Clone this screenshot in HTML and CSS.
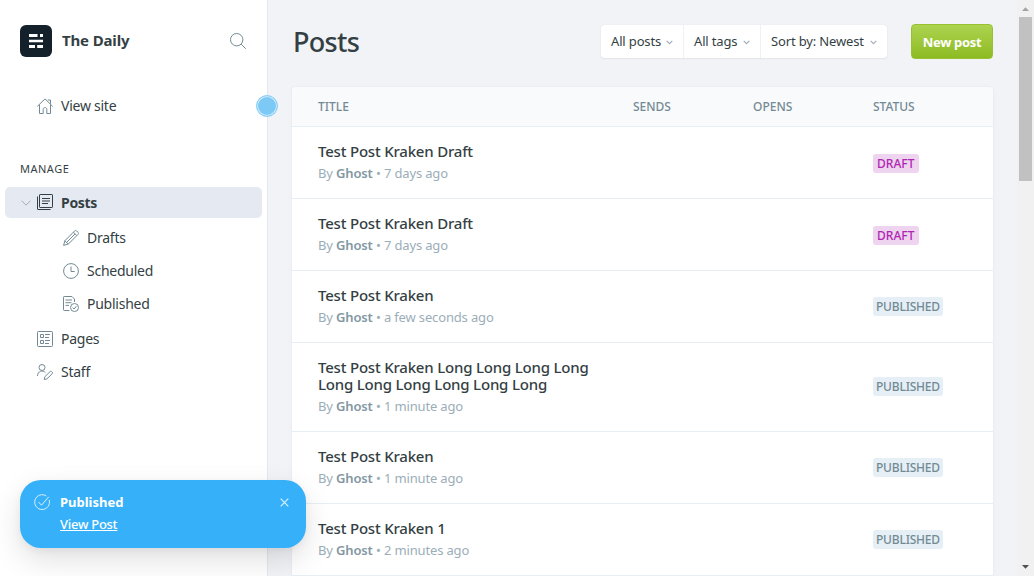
FILE: index.html
```html
<!DOCTYPE html>
<html lang="en">
<head>
<meta charset="utf-8">
<title>Posts - The Daily</title>
<link rel="stylesheet" href="styles.css">
</head>
<body>
<div class="app">
  <nav class="sidebar">
    <header class="brand">
      <svg class="brand-logo" viewBox="0 0 32 32"><rect width="32" height="32" rx="6" fill="#15212a"/><path fill="#fff" d="M9 9h8.500v3H9zM20 9h3v3h-3zM9 14.700h14v2.600H9zM9 20h6v3H9zM17.200 20H23v3h-5.800z"/></svg>
      <span class="brand-name">The Daily</span>
      <svg class="icon search" viewBox="0 0 16 16"><circle cx="6.700" cy="6.700" r="6.200"/><path d="M11.200 11.200l4.600 4.600"/></svg>
    </header>
    <a class="nav-item view-site">
      <svg class="icon" viewBox="0 0 16 16"><path d="M.3 8.400L8 .9l7.700 7.500M2.500 6.700v8.800h3.700v-4.200c0-2.300 3.600-2.300 3.600 0v4.200h3.700V6.700M10.800 2h2.700v3.800"/></svg>
      <span>View site</span>
    </a>
    <h2 class="section-title">MANAGE</h2>
    <ul class="nav-list">
      <li class="nav-item active">
        <svg class="icon chevron" viewBox="0 0 10 6"><path d="M.5.7L5 5.200 9.500.7"/></svg>
        <svg class="icon" viewBox="0 0 16 16"><rect x="2.500" y=".5" width="13" height="13" rx=".6"/><path d="M.5 2.500V15c0 .3.2.5.500.5h12.500M5 4.500h8M5 7h8M5 9.500h6"/></svg>
        <span>Posts</span>
      </li>
      <li class="nav-item sub">
        <svg class="icon" viewBox="0 0 16 16"><path d="M.6 15.400l1.300-4.700L11.700.9c.5-.5 1.300-.5 1.800 0l1.600 1.600c.5.500.5 1.300 0 1.800L5.300 14.100zM1.900 10.700l3.400 3.400M10.400 2.200l3.400 3.400M3.600 12.400l8.500-8.500"/></svg>
        <span>Drafts</span>
      </li>
      <li class="nav-item sub">
        <svg class="icon" viewBox="0 0 16 16"><circle cx="8" cy="8" r="7.400"/><path d="M8 3.500V8.500h3.700"/></svg>
        <span>Scheduled</span>
      </li>
      <li class="nav-item sub">
        <svg class="icon" viewBox="0 0 16 16"><path d="M6.500 14.500H1.200c-.4 0-.7-.3-.7-.7V1.200c0-.4.3-.7.7-.7H9l2.500 2.500v3M2.500 4h6.500M2.500 6.700h6M2.500 9.400h3.500"/><circle cx="11.500" cy="11.500" r="4"/><path d="M9.700 11.600l1.400 1.400 2.400-2.900"/></svg>
        <span>Published</span>
      </li>
      <li class="nav-item page">
        <svg class="icon" viewBox="0 0 16 16"><rect x=".5" y=".5" width="15" height="15" rx=".8"/><path d="M3.500 3.500h3v3h-3zM3.500 9.500h3v3h-3zM8 3.500h5M8 6.500h4M8 9.500h5M8 12.500h4"/></svg>
        <span>Pages</span>
      </li>
      <li class="nav-item page">
        <svg class="icon" viewBox="0 0 16 16"><circle cx="5" cy="3.500" r="3"/><path d="M.5 12c0-5 5.500-6.500 8-3.300M7.200 15.500l.6-2.700 5.300-5.200c.5-.5 1.100-.5 1.600 0l.5.5c.5.5.5 1.100 0 1.600l-5.300 5.200z"/></svg>
        <span>Staff</span>
      </li>
    </ul>
    <span class="marker"></span>
  </nav>

  <main class="content">
    <header class="page-header">
      <h1>Posts</h1>
      <div class="filters">
        <button class="filter f-posts"><span>All posts</span><svg viewBox="0 0 7 5"><path d="M.7.8l2.800 2.900L6.300.8"/></svg></button>
        <button class="filter f-tags"><span>All tags</span><svg viewBox="0 0 7 5"><path d="M.7.8l2.800 2.900L6.300.8"/></svg></button>
        <button class="filter f-sort"><span>Sort by: Newest</span><svg viewBox="0 0 7 5"><path d="M.7.8l2.800 2.900L6.300.8"/></svg></button>
      </div>
      <button class="new-post">New post</button>
    </header>
    <section class="posts">
      <div class="row head"><span>TITLE</span><span>SENDS</span><span>OPENS</span><span>STATUS</span></div>
      <div class="row"><div><h3>Test Post Kraken Draft</h3><p>By <b>Ghost</b> • 7 days ago</p></div><span class="tag draft">DRAFT</span></div>
      <div class="row"><div><h3>Test Post Kraken Draft</h3><p>By <b>Ghost</b> • 7 days ago</p></div><span class="tag draft">DRAFT</span></div>
      <div class="row"><div><h3>Test Post Kraken</h3><p>By <b>Ghost</b> • a few seconds ago</p></div><span class="tag">PUBLISHED</span></div>
      <div class="row"><div><h3>Test Post Kraken Long Long Long Long<br>Long Long Long Long Long Long</h3><p>By <b>Ghost</b> • 1 minute ago</p></div><span class="tag tag-tall">PUBLISHED</span></div>
      <div class="row"><div><h3>Test Post Kraken</h3><p>By <b>Ghost</b> • 1 minute ago</p></div><span class="tag">PUBLISHED</span></div>
      <div class="row"><div><h3>Test Post Kraken 1</h3><p>By <b>Ghost</b> • 2 minutes ago</p></div><span class="tag">PUBLISHED</span></div>
    </section>
  </main>

  <div class="scrollbar">
    <svg viewBox="0 0 17 17"><path d="M5 11h7L8.500 7.200z" fill="#a3a3a3"/></svg>
    <div class="thumb"></div>
    <svg viewBox="0 0 17 17"><path d="M5 6h7L8.500 9.800z" fill="#505050"/></svg>
  </div>
</div>

<aside class="toast">
  <svg class="toast-check" viewBox="0 0 16 16"><path d="M15.200 6A7.400 7.400 0 1 1 12.300 2M4.500 8l3 3.200L14.700 2.900"/></svg>
  <div class="toast-text"><strong>Published</strong><a>View Post</a></div>
  <svg class="toast-close" viewBox="0 0 9 9"><path d="M.7.7l7.600 7.600M8.300.7L.7 8.300"/></svg>
</aside>
</body>
</html>
```
FILE: styles.css
```css
* { box-sizing: border-box; }
body {
  margin: 0;
  height: 576px;
  overflow: hidden;
  font-family: "Noto Sans", "Open Sans", sans-serif;
  color: #343f44;
}
h1, h2, h3, p, ul { margin: 0; padding: 0; font-weight: 400; }
ul { list-style: none; }
button { border: 0; font: inherit; color: inherit; padding: 0; }
.app { display: flex; height: 576px; background: #f2f3f7; }

.sidebar {
  position: relative;
  width: 268px;
  flex: none;
  background: #fff;
  border-right: 1px solid #e3e8f0;
}
.brand { display: flex; align-items: center; height: 32px; margin: 25px 21px 0 20px; }
.brand-logo { width: 32px; height: 32px; margin-right: 10px; }
.brand-name { flex: 1; padding-bottom: 2px; font-size: 15px; font-weight: 700; letter-spacing: -.15px; color: #343f44; }
.icon {
  flex: none;
  width: 16px;
  height: 16px;
  fill: none;
  stroke: #738a94;
  stroke-width: 1;
}
.nav-item { display: flex; align-items: center; height: 33px; font-size: 14px; letter-spacing: -.25px; }
.nav-item .icon { margin-top: -1px; }
.nav-item span { margin-left: 8px; padding-bottom: 2px; }
.nav-item.active span { padding-bottom: 0; letter-spacing: -.3px; }
.view-site { margin-top: 33px; padding-left: 37px; }
.section-title { margin: 38px 0 0 20px; height: 16px; line-height: 16px; font-size: 11px; letter-spacing: .5px; }
.nav-list { margin-top: 10px; }
.nav-item.active {
  height: 31px;
  margin: 0 5px 4px;
  padding-left: 15px;
  border-radius: 5px;
  background: #e5eaf2;
  font-weight: 700;
}
.active .icon { stroke: #343f44; }
.nav-item .chevron { width: 10px; height: 6px; margin: 0 6px 0 1px; stroke: #9fabb6; }
.sub { padding-left: 63px; }
.sub + .page { margin-top: 2px; }
.page { padding-left: 37px; }
.marker {
  position: absolute;
  left: 256px;
  top: 95px;
  width: 22px;
  height: 22px;
  border-radius: 50%;
  background: #7cc9f6;
  border: 1px solid #8fd0f5;
  box-shadow: inset 0 0 0 1px #d4eefc;
}

.content { width: 749px; flex: none; padding: 24px 24px 0; }
.page-header { display: flex; height: 35px; }
h1 { flex: 1; padding-left: 1px; line-height: 36px; font-size: 27px; font-weight: 500; letter-spacing: -.7px; }
.filters {
  display: flex;
  width: 286px;
  height: 33px;
  margin: 1px 24px 0 0;
  border-radius: 3px;
  background: #fff;
  box-shadow: 0 0 1px rgba(0, 0, 0, .15), 0 1px 2px rgba(0, 0, 0, .05);
}
.filter {
  display: flex;
  align-items: center;
  justify-content: space-between;
  padding: 0 10px;
  background: none;
  font-size: 13px;
  letter-spacing: -.15px;
  white-space: nowrap;
}
.filter span { padding-bottom: 2px; }
.filter + .filter { border-left: 1px solid #f0f1f5; }
.filter svg { width: 7px; height: 5px; margin-top: 1px; fill: none; stroke: #a3afb9; stroke-width: 1.200; }
.f-posts { width: 82px; }
.f-tags { width: 77px; }
.f-sort { width: 127px; }
.new-post {
  width: 82px;
  height: 35px;
  border: 1px solid #98c130;
  border-radius: 4px;
  background: linear-gradient(#add350, #8ebb23);
  color: #fff;
  font-size: 13px;
  font-weight: 700;
  letter-spacing: -.33px;
}

.posts {
  margin-top: 28px;
  border-radius: 4px 4px 0 0;
  background: #fff;
  box-shadow: 0 0 1px rgba(0, 0, 0, .13), 0 1px 6px rgba(0, 0, 0, .03);
}
.row {
  display: grid;
  grid-template-columns: 315px 120px 120px 120px;
  align-items: center;
  padding: 15px 0 15px 26px;
  border-bottom: 1px solid #e5eff5;
}
.row.head {
  height: 40px;
  padding: 0 0 0 26px;
  border-radius: 4px 4px 0 0;
  background: #f9fafc;
  font-size: 12px;
  font-weight: 500;
  color: #738a94;
}
h3 { font-size: 15px; line-height: 17px; font-weight: 500; letter-spacing: -.2px; white-space: nowrap; margin-top: 1px; }
.row p { margin-top: 4px; height: 19px; font-size: 13px; line-height: 18px; letter-spacing: -.15px; color: #9baeb8; white-space: nowrap; }
.row b { font-weight: 600; color: #8397a2; }
.tag {
  grid-column: 4;
  justify-self: start;
  height: 19px;
  padding: 0 3px;
  border-radius: 3px;
  background: #e5eff5;
  color: #738a94;
  font-size: 12px;
  font-weight: 500;
  letter-spacing: -.2px;
  line-height: 20px;
}
.tag.draft { margin-top: 1px; background: #eed4ee; color: #ad26b4; padding: 0 4px; letter-spacing: .05px; }
.tag-tall { margin-bottom: 2px; }

.scrollbar { display: flex; flex-direction: column; width: 17px; background: #f1f1f1; }
.scrollbar svg { width: 17px; height: 17px; }
.thumb { width: 13px; height: 164px; margin: 0 2px 378px; background: #c1c1c1; }

.toast {
  position: absolute;
  left: 20px;
  top: 480px;
  display: flex;
  width: 286px;
  height: 68px;
  padding: 14px 17px 0 14px;
  border-radius: 21px;
  background: #36b1f9;
  color: #fff;
  box-shadow: 0 12px 30px rgba(0, 0, 0, .12), 0 3px 8px rgba(0, 0, 0, .05);
}
.toast svg { fill: none; stroke: #d9f0ff; }
.toast-check { width: 16px; height: 16px; }
.toast-text { display: flex; flex: 1; flex-direction: column; align-items: flex-start; margin: -3px 0 0 10px; font-size: 13px; line-height: 22px; }
.toast-text a { font-weight: 500; letter-spacing: -.27px; text-decoration: underline; }
.toast-close { width: 9px; height: 9px; margin-top: 4px; stroke-width: 1.200; }
```
